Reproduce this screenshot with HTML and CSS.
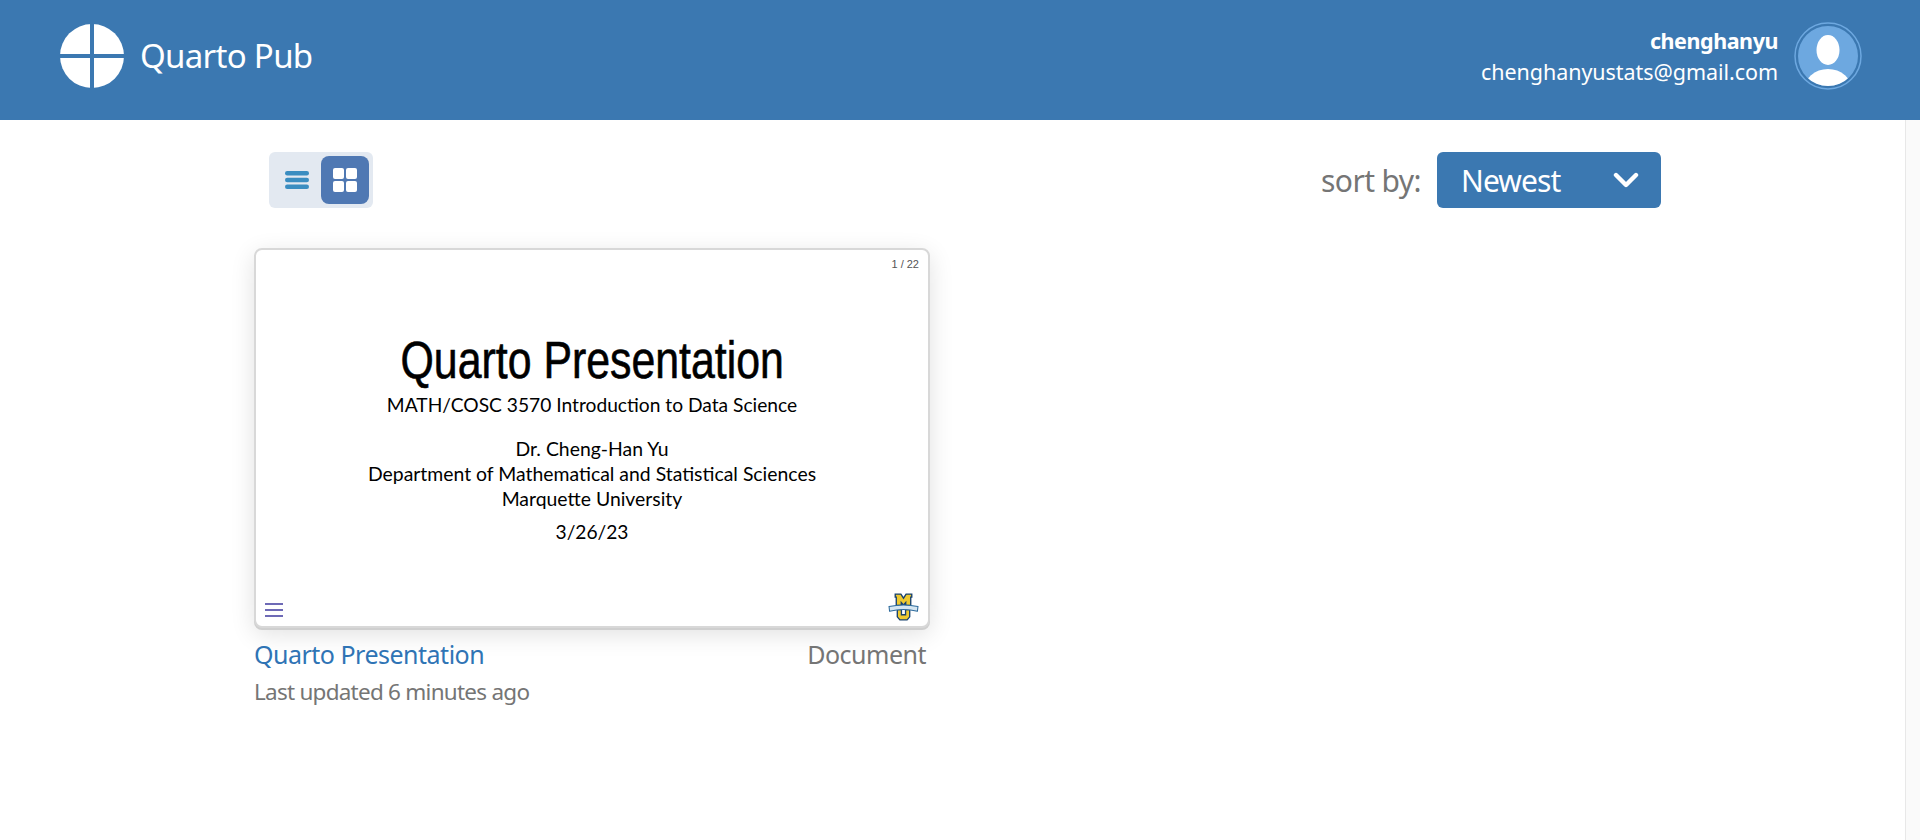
FILE: index.html
```html
<!DOCTYPE html>
<html lang="en">
<head>
    <meta charset="UTF-8">
    <meta name="viewport" content="width=device-width, initial-scale=1.0">
    <title>Quarto Pub</title>
    <link rel="stylesheet" href="styles.css">
</head>
<body>
    <header class="top-bar">
        <div class="brand">
            <svg class="brand-logo" viewBox="0 0 64 64" aria-hidden="true">
                <circle cx="32" cy="32" r="32" fill="#ffffff"/>
                <rect x="30" y="0" width="4" height="64" fill="#3b78b1"/>
                <rect x="0" y="30" width="64" height="4" fill="#3b78b1"/>
            </svg>
            <span class="brand-name">Quarto Pub</span>
        </div>
        <div class="user">
            <div class="user-text">
                <div class="user-name">chenghanyu</div>
                <div class="user-email">chenghanyustats@gmail.com</div>
            </div>
            <svg class="avatar" viewBox="0 0 68 68" aria-hidden="true">
                <defs>
                    <clipPath id="avatar-clip"><circle cx="34" cy="34" r="30"/></clipPath>
                </defs>
                <circle cx="34" cy="34" r="33" fill="none" stroke="#6da8e0" stroke-width="1.5"/>
                <circle cx="34" cy="34" r="30" fill="#6da8e0"/>
                <g clip-path="url(#avatar-clip)" fill="#ffffff">
                    <ellipse cx="34" cy="28" rx="11.5" ry="15"/>
                    <ellipse cx="34" cy="68" rx="24" ry="21"/>
                </g>
            </svg>
        </div>
    </header>

    <div class="page-body">
        <main class="content">
            <div class="toolbar">
                <div class="view-toggle">
                    <button class="view-btn" type="button" aria-label="List view">
                        <svg viewBox="0 0 24 20" width="24" height="20" aria-hidden="true">
                            <rect x="0" y="1" width="24" height="4.4" rx="2.2" fill="#3a8dc1"/>
                            <rect x="0" y="7.8" width="24" height="4.4" rx="2.2" fill="#3a8dc1"/>
                            <rect x="0" y="14.6" width="24" height="4.4" rx="2.2" fill="#3a8dc1"/>
                        </svg>
                    </button>
                    <button class="view-btn active" type="button" aria-label="Grid view">
                        <svg viewBox="0 0 24 24" width="24" height="24" aria-hidden="true">
                            <rect x="0" y="0" width="11" height="11" rx="2" fill="#ffffff"/>
                            <rect x="13" y="0" width="11" height="11" rx="2" fill="#ffffff"/>
                            <rect x="0" y="13" width="11" height="11" rx="2" fill="#ffffff"/>
                            <rect x="13" y="13" width="11" height="11" rx="2" fill="#ffffff"/>
                        </svg>
                    </button>
                </div>
                <div class="sort">
                    <span class="sort-label">sort by:</span>
                    <div class="sort-select">
                        <span>Newest</span>
                        <svg viewBox="0 0 26 18" width="26" height="18" aria-hidden="true">
                            <path d="M3 4 L13 14 L23 4" fill="none" stroke="#ffffff" stroke-width="4.4" stroke-linecap="round" stroke-linejoin="round"/>
                        </svg>
                    </div>
                </div>
            </div>

            <article class="doc-card">
                <div class="slide">
                    <div class="slide-count">1 / 22</div>
                    <h1 class="slide-title">Quarto Presentation</h1>
                    <p class="slide-subtitle">MATH/COSC 3570 Introduction to Data Science</p>
                    <p class="slide-author">Dr. Cheng-Han Yu<br>Department of Mathematical and Statistical Sciences<br>Marquette University</p>
                    <p class="slide-date">3/26/23</p>
                    <div class="slide-footer">
                        <svg viewBox="0 0 18 16" width="18" height="16" aria-hidden="true">
                            <path d="M0 2 H18 M0 8 H18 M0 14 H18" stroke="#3f3a9e" stroke-width="1.6"/>
                        </svg>
                        <svg class="slide-logo" viewBox="0 0 30 27" width="31" height="28" aria-hidden="true">
                            <path d="M7 1 H12.5 L15 5 L17.5 1 H23 V4 H22 V12 H8 V4 H7 Z" fill="#eec92f" stroke="#17416f" stroke-width="1.3"/>
                            <path d="M12.2 12 V7.5 L15 10.5 L17.8 7.5 V12 Z" fill="#17416f"/>
                            <path d="M9 16 H13 V21 H17 V16 H21 V23 L18.5 26 H11.5 L9 23 Z" fill="#eec92f" stroke="#17416f" stroke-width="1.3"/>
                            <path d="M1 13 Q15 10 29 13 L28.5 17.5 Q15 14.5 1.5 17.5 Z" fill="#d5e6f1" stroke="#2c6a9c" stroke-width="1"/>
                        </svg>
                    </div>
                </div>
                <div class="doc-meta">
                    <a class="doc-title" href="#">Quarto Presentation</a>
                    <span class="doc-type">Document</span>
                </div>
                <div class="doc-updated">Last updated 6 minutes ago</div>
            </article>
        </main>
        <div class="scroll-track"></div>
    </div>
</body>
</html>
```

FILE: styles.css
```css
* {
    box-sizing: border-box;
}

body {
    margin: 0;
    font-family: "Noto Sans", Arial, sans-serif;
    background-color: #ffffff;
    height: 840px;
    overflow: hidden;
}

.top-bar {
    height: 120px;
    background-color: #3b78b1;
    color: #ffffff;
    display: flex;
    justify-content: space-between;
    align-items: center;
    padding: 0 58px 8px 60px;
}

.brand {
    display: flex;
    align-items: center;
    gap: 16px;
}

.brand-logo {
    width: 64px;
    height: 64px;
}

.brand-name {
    font-size: 33px;
    letter-spacing: -0.7px;
    position: relative;
    top: -1px;
}

.user {
    display: flex;
    align-items: center;
    gap: 16px;
}

.user-text {
    text-align: right;
    font-size: 21.5px;
    line-height: 31px;
}

.user-name {
    font-weight: 700;
    letter-spacing: -0.45px;
}

.user-email {
    letter-spacing: -0.05px;
}

.avatar {
    width: 68px;
    height: 68px;
}

.page-body {
    display: flex;
    height: 720px;
}

.content {
    flex: 1;
    padding: 32px 0 0 254px;
}

.toolbar {
    display: flex;
    justify-content: space-between;
    align-items: center;
    width: 1407px;
    padding-left: 15px;
}

.view-toggle {
    display: flex;
    width: 104px;
    height: 56px;
    padding: 4px;
    background-color: #e3e9f1;
    border-radius: 6px;
}

.view-btn {
    flex: 1;
    border: none;
    padding: 0;
    background: none;
    display: flex;
    align-items: center;
    justify-content: center;
    border-radius: 8px;
}

.view-btn.active {
    background-color: #4f78b3;
}

.sort {
    display: flex;
    align-items: center;
    gap: 16px;
}

.sort-label {
    font-size: 30px;
    letter-spacing: -0.6px;
    color: #757575;
}

.sort-select {
    width: 224px;
    height: 56px;
    background-color: #3b78b1;
    color: #ffffff;
    border-radius: 6px;
    display: flex;
    justify-content: space-between;
    align-items: center;
    padding: 0 22px 0 24px;
    font-size: 30px;
    letter-spacing: -0.9px;
}

.doc-card {
    width: 676px;
    margin-top: 40px;
}

.slide {
    height: 380px;
    background-color: #ffffff;
    border: 2px solid #d8d8d8;
    border-radius: 8px;
    box-shadow: 0 2px 0 #cfcfcf, 0 6px 24px rgba(0, 0, 0, 0.12);
    display: flex;
    flex-direction: column;
    align-items: center;
    padding: 8px 9px 8px;
    color: #000000;
    font-family: Lato, sans-serif;
    text-align: center;
}

.slide-count {
    align-self: flex-end;
    font-family: "Liberation Sans", Arial, sans-serif;
    font-size: 11px;
    line-height: 13px;
    color: #555555;
}

.slide-title {
    margin: 61px 0 0;
    font-family: "Liberation Sans", Arial, sans-serif;
    font-size: 51px;
    line-height: 58px;
    font-weight: 400;
    white-space: nowrap;
    transform: scaleX(0.84);
    -webkit-text-stroke: 0.6px #000000;
}

.slide-subtitle,
.slide-date {
    margin: 0;
    font-size: 19.2px;
    line-height: 25px;
}

.slide-subtitle {
    margin-top: 2px;
}

.slide-author {
    margin: 19px 0 0;
    font-size: 19.4px;
    line-height: 25px;
}

.slide-date {
    margin-top: 8px;
}

.slide-footer {
    margin-top: auto;
    align-self: stretch;
    display: flex;
    justify-content: space-between;
    align-items: flex-end;
}

.slide-logo {
    margin-bottom: -3px;
}

.doc-meta {
    display: flex;
    justify-content: space-between;
    align-items: baseline;
    margin-top: 9px;
    padding-right: 4px;
    font-size: 25px;
    line-height: 34px;
    letter-spacing: -0.5px;
}

.doc-title {
    color: #2f74b5;
    text-decoration: none;
}

.doc-type {
    color: #757575;
}

.doc-updated {
    margin-top: 5px;
    font-size: 22.5px;
    line-height: 32px;
    letter-spacing: -0.75px;
    color: #757575;
}

.scroll-track {
    width: 15px;
    background-color: #fafafa;
    border-left: 1px solid #e8e8e8;
}
```
